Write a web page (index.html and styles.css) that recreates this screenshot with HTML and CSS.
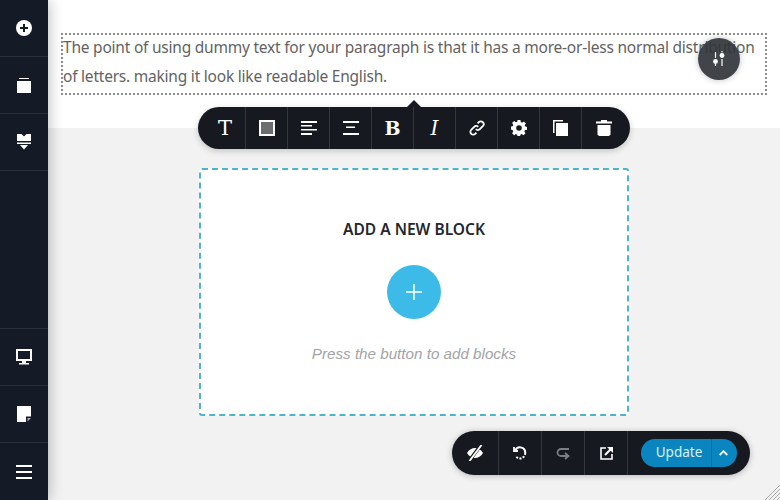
FILE: index.html
```html
<!DOCTYPE html>
<html lang="en">

<head>
    <meta charset="UTF-8">
    <title>Add a new block</title>
    <link rel="stylesheet" href="styles.css">
</head>

<body>
    <div class="sidebar">
        <div class="side_group">
            <div class="side_item">
                <svg width="16" height="16" viewBox="0 0 16 16"><circle cx="8" cy="8" r="8" fill="#fff"/><path d="M8 4v8M4 8h8" stroke="#141a26" stroke-width="2"/></svg>
            </div>
            <div class="side_item">
                <svg width="16" height="16" viewBox="0 0 16 16"><path d="M3 1h10v1H3z" fill="#fff"/><path d="M1 4h14v12H1z" fill="#fff"/></svg>
            </div>
            <div class="side_item">
                <svg width="16" height="16" viewBox="0 0 16 16"><path d="M1 0h4.500L8 2.500 10.500 0H15v7H1zM1 8.500h14V10H1zM4 11h8l-4 4.500z" fill="#fff"/></svg>
            </div>
        </div>
        <div class="side_group">
            <div class="side_item side_item_top">
                <svg width="16" height="16" viewBox="0 0 16 16"><path d="M1 1h14v10H1z" fill="none" stroke="#fff" stroke-width="2"/><path d="M6 12h4v2H6zM3 14h10v1.500H3z" fill="#fff"/></svg>
            </div>
            <div class="side_item">
                <svg width="16" height="16" viewBox="0 0 16 16"><path d="M1 0h14v10.500h-5V16H1z" fill="#fff"/><path d="M11.500 12H15l-3.500 3.500z" fill="#a9adb3"/></svg>
            </div>
            <div class="side_item">
                <svg width="16" height="14" viewBox="0 0 16 14"><path d="M0 0h16v2H0zM0 6h16v2H0zM0 12h16v2H0z" fill="#fff"/></svg>
            </div>
        </div>
    </div>

    <div class="main">
        <div class="text_area">
            <div class="text_block">
                <p class="text_copy">The point of using dummy text for your paragraph is that it has a more-or-less normal distribution of letters. making it look like readable English.</p>
            </div>
        </div>
        <div class="block_area">
            <div class="add_card">
                <h2 class="add_title">ADD A NEW BLOCK</h2>
                <div class="add_btn">
                    <svg width="18" height="18" viewBox="0 0 18 18"><path d="M9 1v16M1 9h16" stroke="#fff" stroke-width="1.500"/></svg>
                </div>
                <p class="add_hint">Press the button to add blocks</p>
            </div>
        </div>
    </div>

    <div class="fab">
        <svg width="16" height="16" viewBox="0 0 16 16"><path d="M4.500 1v6M4.500 13v2M11 0v1.500M11 8v7" stroke="#fff" stroke-width="1.200"/><circle cx="4.500" cy="10.500" r="2.400" fill="#fff"/><circle cx="11" cy="4.500" r="2.400" fill="#fff"/></svg>
    </div>

    <div class="toolbar">
        <div class="tool tool_first"><span class="glyph_t">T</span></div>
        <div class="tool">
            <svg width="16" height="16" viewBox="0 0 16 16"><path d="M1 1h14v14H1z" fill="#6d6d6d" stroke="#fff" stroke-width="2"/></svg>
        </div>
        <div class="tool">
            <svg width="16" height="14" viewBox="0 0 16 14"><path d="M0 0h16v2H0zM0 4h11v1.500H0zM0 8h16v1.500H0zM0 12h11v2H0z" fill="#fff"/></svg>
        </div>
        <div class="tool">
            <svg width="16" height="14" viewBox="0 0 16 14"><path d="M0 0h16v2H0zM3 5.500h9V7H3zM0 12h16v2H0z" fill="#fff"/></svg>
        </div>
        <div class="tool"><span class="glyph_b">B</span></div>
        <div class="tool"><span class="glyph_i">I</span></div>
        <div class="tool">
            <svg width="16" height="16" viewBox="0 0 16 16" fill="none" stroke="#fff" stroke-width="1.800"><path d="M6.800 9.200a2.800 2.800 0 0 0 4 0l3-3a2.800 2.800 0 0 0-4-4L8.600 3.400"/><path d="M9.200 6.800a2.800 2.800 0 0 0-4 0l-3 3a2.800 2.800 0 0 0 4 4l1.200-1.200"/></svg>
        </div>
        <div class="tool">
            <svg width="16" height="16" viewBox="0 0 16 16"><path fill="#fff" fill-rule="evenodd" d="M6.600 0h2.800l.4 2.100 1.300.6 1.800-1.200 2 2-1.200 1.800.6 1.300 1.700.4v2.800l-2.100.4-.6 1.300 1.200 1.800-2 2-1.800-1.200-1.300.6-.4 2.100H6.600l-.4-2.100-1.300-.6-1.800 1.200-2-2 1.200-1.800-.6-1.300L0 9.400V6.600l1.700-.4.600-1.300-1.200-1.800 2-2 1.800 1.200 1.300-.6zM8 5.200a2.800 2.800 0 1 0 0 5.600 2.800 2.800 0 0 0 0-5.600z"/></svg>
        </div>
        <div class="tool">
            <svg width="15" height="16" viewBox="0 0 15 16"><path d="M0 0h10v1.500H1.500V13H0z" fill="#fff"/><path d="M3 3h12v13H3z" fill="#fff"/></svg>
        </div>
        <div class="tool tool_last">
            <svg width="16" height="16" viewBox="0 0 16 16"><path d="M5 1.500V0h6v1.500h5V3.500H0V1.500z" fill="#fff"/><path d="M1.500 5h13v9.500L13 16H3l-1.500-1.500z" fill="#fff"/></svg>
        </div>
        <div class="toolbar_arrow"></div>
    </div>

    <div class="actions">
        <div class="action">
            <svg width="18" height="16" viewBox="0 0 18 16"><path d="M1 8c2-3.500 5-5 8-5s6 1.500 8 5c-2 3.500-5 5-8 5S3 11.500 1 8z" fill="#fff"/><path d="M15 0 3 16" stroke="#161a20" stroke-width="3.500"/><path d="M15.500 0 3.500 16" stroke="#fff" stroke-width="1.800"/></svg>
        </div>
        <div class="action">
            <svg width="14" height="14" viewBox="0 0 14 14" fill="none" stroke="#fff" stroke-width="2"><path d="M2.500 4A5.200 5.200 0 0 1 12.200 7"/><path d="M12.200 7A5.200 5.200 0 0 1 3 10.500" stroke-dasharray="2 1.400"/><path d="M1 1v4h4" stroke-width="1.800"/></svg>
        </div>
        <div class="action">
            <svg width="14" height="14" viewBox="0 0 14 14" fill="none" stroke="#7b7e83" stroke-width="1.800"><path d="M13 3H5a3.500 3.500 0 0 0 0 7h7"/><path d="M9 7l3.500 3L9 13"/></svg>
        </div>
        <div class="action">
            <svg width="13" height="13" viewBox="0 0 13 13" fill="none" stroke="#fff" stroke-width="1.600"><path d="M6 1H1v11h11V7"/><path d="M5 8l6-6" stroke-width="2"/><path d="M7 0h6v6z" fill="#fff" stroke="none"/></svg>
        </div>
        <div class="update_wrap">
            <div class="update_btn">
                <span class="update_label">Update</span>
                <span class="update_more">
                    <svg width="9" height="6" viewBox="0 0 9 6" fill="none" stroke="#fff" stroke-width="1.800"><path d="M.7 5 4.500 1.200 8.300 5"/></svg>
                </span>
            </div>
        </div>
    </div>

    <svg class="resize" width="15" height="15" viewBox="0 0 15 15" stroke="#a9a9a9"><path d="M0 15 15 0M4 15 15 4M8 15l7-7M12 15l3-3"/></svg>
</body>

</html>
```

FILE: styles.css
```css
* {
    margin: 0;
    padding: 0;
    box-sizing: border-box;
}

html,
body {
    width: 780px;
    height: 500px;
    overflow: hidden;
}

body {
    display: flex;
    position: relative;
    font-family: "Noto Sans", sans-serif;
    background: #f2f2f2;
}

/* left bar */
.sidebar {
    width: 48px;
    height: 500px;
    background: #141a26;
    display: flex;
    flex-direction: column;
    justify-content: space-between;
    box-shadow: 0 0 14px rgba(0, 0, 0, .3);
    z-index: 2;
}

.side_item {
    height: 57px;
    display: flex;
    align-items: center;
    justify-content: center;
    border-bottom: 1px solid #2b303b;
}

.side_group:last-child .side_item:last-child {
    border-bottom: 0;
}

.side_item_top {
    border-top: 1px solid #2b303b;
    height: 58px;
}

.main {
    flex: 1;
    display: flex;
    flex-direction: column;
}

.text_area {
    height: 128px;
    background: #fff;
    padding: 33px 13px 0;
}

.text_block {
    width: 706px;
    height: 62px;
    border: 2px dotted #8b8b8b;
}

.text_copy {
    margin-top: -2px;
    font-size: 15.5px;
    line-height: 29px;
    letter-spacing: -.22px;
    color: #636363;
}

.block_area {
    flex: 1;
    display: flex;
    justify-content: center;
    padding-top: 40px;
}

.add_card {
    width: 430px;
    height: 248px;
    background: #fff;
    border: 2px dashed #4cb4cc;
    border-radius: 3px;
    display: flex;
    flex-direction: column;
    align-items: center;
    padding-top: 49px;
}

.add_title {
    font-size: 15.5px;
    line-height: 20px;
    font-weight: 600;
    color: #24272d;
}

.add_btn {
    width: 54px;
    height: 54px;
    margin-top: 26px;
    border-radius: 50%;
    background: #3dbbe8;
    display: flex;
    align-items: center;
    justify-content: center;
}

.add_hint {
    margin-top: 24px;
    font-family: "Liberation Sans", sans-serif;
    font-style: italic;
    font-size: 15.2px;
    line-height: 22px;
    color: #a3a3a6;
}

/* floating things */
.fab {
    position: absolute;
    left: 698px;
    top: 38px;
    width: 42px;
    height: 42px;
    border-radius: 50%;
    background: rgba(49, 53, 59, .92);
    box-shadow: 0 0 6px rgba(0, 0, 0, .25);
    display: flex;
    align-items: center;
    justify-content: center;
}

.toolbar {
    position: absolute;
    left: 198px;
    top: 107px;
    width: 432px;
    height: 42px;
    border-radius: 21px;
    background: #161a20;
    box-shadow: 0 2px 6px rgba(0, 0, 0, .2);
    display: flex;
}

.tool {
    width: 42px;
    height: 42px;
    border-left: 1px solid #33373d;
    display: flex;
    align-items: center;
    justify-content: center;
    color: #fff;
}

.tool_first {
    width: 47px;
    padding-left: 7px;
    border-left: 0;
}

.tool_last {
    width: 49px;
    padding-right: 5px;
}

.toolbar_arrow {
    position: absolute;
    left: 209px;
    top: -7px;
    border-left: 7px solid transparent;
    border-right: 7px solid transparent;
    border-bottom: 7px solid #161a20;
}

.glyph_t,
.glyph_b,
.glyph_i {
    font-family: "DejaVu Serif", serif;
    line-height: 1;
}

.glyph_t {
    font-size: 21px;
}

.glyph_b {
    font-size: 19px;
    font-weight: bold;
}

.glyph_i {
    font-size: 20px;
    font-style: italic;
}

.actions {
    position: absolute;
    left: 452px;
    top: 431px;
    width: 298px;
    height: 44px;
    border-radius: 22px;
    background: #161a20;
    box-shadow: 0 1px 6px rgba(0, 0, 0, .25);
    display: flex;
}

.action {
    width: 43px;
    height: 44px;
    border-right: 1px solid #33373d;
    display: flex;
    align-items: center;
    justify-content: center;
}

.action:first-child {
    width: 47px;
}

.update_wrap {
    flex: 1;
    display: flex;
    align-items: center;
    padding-left: 13px;
}

.update_btn {
    width: 96px;
    height: 28px;
    border-radius: 14px;
    background: #0a85bf;
    display: flex;
    align-items: center;
    color: #fff;
}

.update_label {
    width: 70px;
    padding: 0 0 2px 6px;
    text-align: center;
    font-size: 13.5px;
    color: #d9f1fb;
}

.update_more {
    flex: 1;
    height: 28px;
    padding-right: 2px;
    border-left: 1px solid #0a6f9f;
    display: flex;
    align-items: center;
    justify-content: center;
}

.resize {
    position: absolute;
    right: 0;
    bottom: 0;
}
```
